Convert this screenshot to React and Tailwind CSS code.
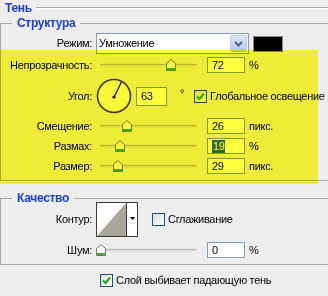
import React from 'react';

// ------------------------------------
//  Small pieces
// ------------------------------------
const Thumb = ({ left }) => (
    <svg
        width="10"
        height="12"
        viewBox="0 0 10 12"
        className="absolute top-1/2 -translate-y-1/2"
        style={{ left }}
    >
        <path d="M0.5,4.5 L5,0.5 L9.5,4.5 L9.5,11.5 L0.5,11.5 Z" fill="#f7f7f7" stroke="#777" />
        <rect x="1" y="9" width="8" height="2" fill="#2db52d" />
    </svg>
);

const Slider = ({ pos }) => (
    <div className="relative w-[104px] h-full">
        <div className="absolute left-[4px] right-[3px] top-1/2 -translate-y-1/2 h-[3px] rounded-full border-t border-[#9a9a9a] bg-[#dcdcdc]" />
        <Thumb left={pos - 5} />
    </div>
);

const NumBox = ({ children, className = 'w-[38px] h-[16px]' }) => (
    <div className={`flex items-center pl-[4px] bg-white border border-[#7f9db9] ${className}`}>
        {children}
    </div>
);

const Checkbox = ({ checked }) => (
    <div className="w-[13px] h-[13px] shrink-0 border border-[#1c5180] bg-gradient-to-br from-[#dcdcd7] to-white">
        {checked && (
            <svg width="11" height="11" viewBox="0 0 11 11">
                <path d="M2,5.5 L4.5,8 L9,2.5" fill="none" stroke="#21a121" strokeWidth="2" />
            </svg>
        )}
    </div>
);

const Row = ({ label, className = '', children }) => (
    <div className={`flex items-center ${className}`}>
        <span className="w-[91px] shrink-0 text-right">{label}</span>
        <div className="ml-[4px] flex items-center h-full">{children}</div>
    </div>
);

const SliderRow = ({ label, pos, value, unit, className }) => (
    <Row label={label} className={`h-[16px] ${className}`}>
        <Slider pos={pos} />
        <div className="ml-[7px]">
            <NumBox>{value}</NumBox>
        </div>
        <span className="ml-[4px]">{unit}</span>
    </Row>
);

// ------------------------------------
//  Dialog
// ------------------------------------
export default function App() {
    return (
        <div className="relative isolate w-[328px] h-[296px] overflow-hidden bg-[#ededed] text-[11px] leading-[13px] tracking-[-0.3px] text-black font-['Liberation_Sans',Arial,sans-serif]">

            {/* Тень */}
            <div className="flex items-center h-[16px] pl-[5px]">
                <span className="font-bold text-[#1d3fd8] text-[12px]">Тень</span>
                <div className="flex-1 ml-[4px] h-[2px] border-t border-[#a8a8a8] border-b border-b-white" />
            </div>

            {/* Структура */}
            <fieldset className="w-[340px] border-t border-l border-b border-[#a8a8a8] pb-[6px]">
                <legend className="ml-[11px] px-[5px] leading-[14px] font-bold text-[12px] text-[#1d3fd8]">Структура</legend>

                <Row label="Режим:" className="mt-[3px] h-[21px]">
                    <div className="flex items-center w-[153px] h-[21px] bg-white border border-[#7f9db9] pl-[2px] pr-[1px]">
                        <span className="flex-1">Умножение</span>
                        <div className="w-[17px] h-[17px] flex items-center justify-center rounded-[2px] border border-[#b9cbf3] bg-gradient-to-b from-[#dbe5fb] to-[#b7caf2]">
                            <svg width="9" height="6" viewBox="0 0 9 6">
                                <path d="M1,1 L4.5,4.5 L8,1" fill="none" stroke="#4d6185" strokeWidth="2" />
                            </svg>
                        </div>
                    </div>
                    <div className="ml-[4px] w-[30px] h-[16px] bg-black border border-[#8a8a8a]" />
                </Row>

                <SliderRow label="Непрозрачность:" pos={75} value="72" unit="%" className="mt-[3px]" />

                <Row label="Угол:" className="mt-[5px] h-[36px]">
                    <svg width="36" height="36" viewBox="0 0 36 36">
                        <circle cx="18" cy="18" r="16.5" fill="#f8f8f8" stroke="#3c3c3c" strokeWidth="1.6" />
                        <line x1="18" y1="19" x2="25.5" y2="4" stroke="#111" strokeWidth="1.2" />
                        <circle cx="18" cy="19" r="1.6" fill="#111" />
                    </svg>
                    <div className="ml-[4px]">
                        <NumBox className="w-[31px] h-[19px]">63</NumBox>
                    </div>
                    <span className="ml-[13px] self-start mt-[9px]">°</span>
                    <div className="ml-[10px]">
                        <Checkbox checked />
                    </div>
                    <span className="ml-[3px] whitespace-nowrap">Глобальное освещение</span>
                </Row>

                <SliderRow label="Смещение:" pos={30.5} value="26" unit="пикс." className="mt-[4px]" />
                <SliderRow
                    label="Размах:"
                    pos={23.5}
                    value={<span className="bg-[#316ac5] text-white pl-[1px]">19</span>}
                    unit="%"
                    className="mt-[4px]"
                />
                <SliderRow label="Размер:" pos={21.5} value="29" unit="пикс." className="mt-[4px]" />
            </fieldset>

            {/* Качество */}
            <fieldset className="mt-[11px] w-[340px] border-t border-l border-b border-[#a8a8a8] pb-[6px]">
                <legend className="ml-[11px] px-[5px] leading-[12px] font-bold text-[12px] text-[#1d3fd8]">Качество</legend>

                <Row label="Контур:" className="-mt-[2px] h-[35px]">
                    <div className="flex w-[42px] h-[35px] border border-[#3a3a3a] bg-white">
                        <svg width="29" height="33" viewBox="0 0 29 33" className="block">
                            <polygon points="0,33 29,0 29,33" fill="#aaa69a" />
                        </svg>
                        <div className="flex-1 border-l border-[#3a3a3a] flex items-center justify-center pb-[3px]">
                            <svg width="5" height="3" viewBox="0 0 5 3">
                                <polygon points="0,0 5,0 2.5,3" fill="#000" />
                            </svg>
                        </div>
                    </div>
                    <div className="ml-[14px]">
                        <Checkbox />
                    </div>
                    <span className="ml-[3px]">Сглаживание</span>
                </Row>

                <SliderRow label="Шум:" pos={5} value="0" unit="%" className="mt-[5px]" />
            </fieldset>

            <div className="mt-[9px] flex items-center pl-[100px]">
                <Checkbox checked />
                <span className="ml-[3px]">Слой выбивает падающую тень</span>
            </div>

            {/* yellow highlight */}
            <div className="pointer-events-none absolute left-0 top-[50px] w-[318px] h-[134px] bg-[#ffff3c] mix-blend-multiply" />
        </div>
    );
}
